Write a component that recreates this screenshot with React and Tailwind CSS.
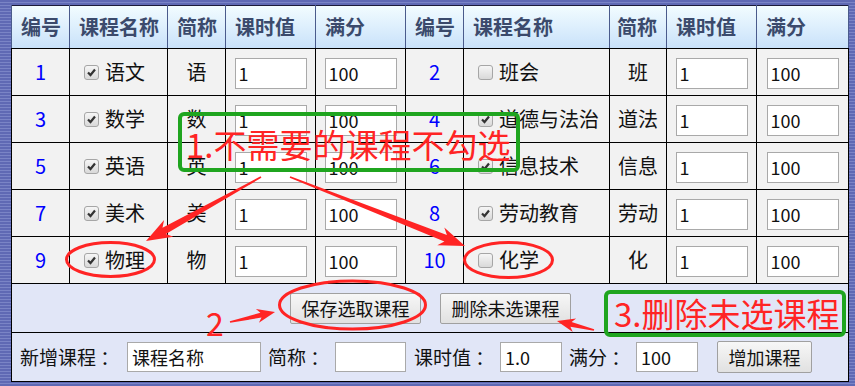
import React from "react";

const rows = [
  { a: [1, "语文", "语", true], b: [2, "班会", "班", false] },
  { a: [3, "数学", "数", true], b: [4, "道德与法治", "道法", true] },
  { a: [5, "英语", "英", true], b: [6, "信息技术", "信息", true] },
  { a: [7, "美术", "美", true], b: [8, "劳动教育", "劳动", true] },
  { a: [9, "物理", "物", true], b: [10, "化学", "化", false] },
];

const widths = [58, 98, 58, 90, 90, 58, 146, 57, 90, 92];
const heads = ["编号", "课程名称", "简称", "课时值", "满分", "编号", "课程名称", "简称", "课时值", "满分"];

function Check({ on }) {
  return (
    <span className="inline-flex items-center justify-center w-[15px] h-[15px] rounded-[3px] border border-[#a6a6a6] bg-linear-to-b from-[#f6f6f6] to-[#d9d9d9] shrink-0">
      {on && (
        <svg width="11" height="11" viewBox="0 0 11 11">
          <path d="M2 5.5 L4.5 8 L9 2.5" fill="none" stroke="#333" strokeWidth="2.2" />
        </svg>
      )}
    </span>
  );
}

function Cells({ d }) {
  const [no, name, short, on] = d;
  return (
    <>
      <td className="border border-black text-center text-[#0000ff]">{no}</td>
      <td className="border border-black pl-[14px]">
        <div className="flex items-center gap-[6px]">
          <Check on={on} />
          <span>{name}</span>
        </div>
      </td>
      <td className="border border-black text-center">{short}</td>
      <td className="border border-black text-center">
        <input defaultValue="1" className="w-[72px] h-[31px] border border-[#a9a9a9] bg-white px-[3px] text-[18px] align-middle" />
      </td>
      <td className="border border-black text-center">
        <input defaultValue="100" className="w-[72px] h-[31px] border border-[#a9a9a9] bg-white px-[3px] text-[18px] align-middle" />
      </td>
    </>
  );
}

// tapered red arrow: thin tail, wider shaft, barbed head
function arrow(x1, y1, x2, y2, t0, t1, hl, hw) {
  const dx = x2 - x1, dy = y2 - y1;
  const L = Math.hypot(dx, dy);
  const ux = dx / L, uy = dy / L;
  const nx = -uy, ny = ux;
  const bx = x2 - ux * hl, by = y2 - uy * hl;
  const nb = x2 - ux * hl * 0.8, mb = y2 - uy * hl * 0.8;
  const p = [
    [x1 + (nx * t0) / 2, y1 + (ny * t0) / 2],
    [nb + (nx * t1) / 2, mb + (ny * t1) / 2],
    [bx + (nx * hw) / 2, by + (ny * hw) / 2],
    [x2, y2],
    [bx - (nx * hw) / 2, by - (ny * hw) / 2],
    [nb - (nx * t1) / 2, mb - (ny * t1) / 2],
    [x1 - (nx * t0) / 2, y1 - (ny * t0) / 2],
  ];
  return p.map((q) => q[0].toFixed(1) + "," + q[1].toFixed(1)).join(" ");
}

const btn =
  "h-[31px] px-[8px] border border-[#a0a0a0] rounded-[2px] bg-linear-to-b from-[#f7f7f7] to-[#e1e1e1] text-[18px] leading-none text-[#111] whitespace-nowrap";
const field = "h-[30px] border border-[#a9a9a9] bg-white px-[4px] text-[18px]";

export default function App() {
  return (
    <div className="relative w-[855px] h-[386px] overflow-hidden bg-[repeating-linear-gradient(180deg,#5f69b4_0px,#5f69b4_2px,#7a84c6_2px,#7a84c6_3px)] pt-[5px] pl-[11px] font-['Noto_Sans_CJK_SC',sans-serif] text-[20px] text-[#111]">
      <table className="table-fixed border-collapse w-[837px] border border-[#1c1c3a] bg-[#f2f2f2]">
        <colgroup>
          {widths.map((w, i) => (
            <col key={i} style={{ width: w }} />
          ))}
        </colgroup>
        <thead>
          <tr className="h-[43px] bg-linear-to-b from-[#f2fcff] to-[#c8e1fa]">
            {heads.map((h, i) => (
              <th
                key={i}
                className={
                  "border-x border-[#4a5b8c] border-b border-b-black font-bold text-[#3b4a6c] text-left whitespace-nowrap " +
                  (i === 7 ? "pl-[7px]" : "pl-[9px]")
                }
              >
                {h}
              </th>
            ))}
          </tr>
        </thead>
        <tbody>
          {rows.map((r, i) => (
            <tr key={i} className="h-[47px]">
              <Cells d={r.a} />
              <Cells d={r.b} />
            </tr>
          ))}
          <tr className="h-[49px] bg-[#e1e6f7]">
            <td colSpan={10} className="border border-black">
              <div className="flex justify-center gap-[19px] pl-[1px]">
                <button className={btn + " w-[131px]"}>保存选取课程</button>
                <button className={btn + " w-[131px]"}>删除未选课程</button>
              </div>
            </td>
          </tr>
          <tr className="h-[49px] bg-[#e1e6f7]">
            <td colSpan={10} className="border border-black pl-[8px]">
              <div className="flex items-center text-[19px]">
                <span className="w-[107px] whitespace-nowrap">新增课程 ：</span>
                <input defaultValue="课程名称" className={field + " w-[134px]"} />
                <span className="ml-[7px] w-[67px] whitespace-nowrap">简称 ：</span>
                <input className={field + " w-[71px]"} />
                <span className="ml-[8px] w-[86px] whitespace-nowrap">课时值 ：</span>
                <input defaultValue="1.0" className={field + " w-[62px]"} />
                <span className="ml-[7px] w-[67px] whitespace-nowrap">满分 ：</span>
                <input defaultValue="100" className={field + " w-[62px]"} />
                <button className={btn + " ml-[19px] w-[95px] h-[32px]"}>增加课程</button>
              </div>
            </td>
          </tr>
        </tbody>
      </table>

      <div className="absolute left-[178px] top-[112px] w-[342px] h-[60px] border-[4px] border-[#1fa51f] rounded-[6px] pl-[4px] flex items-center">
        <span className="text-[33px] leading-[33px] text-[#ff2424] whitespace-nowrap mt-[5px]">1.不需要的课程不勾选</span>
      </div>
      <div className="absolute left-[604px] top-[290px] w-[242px] h-[47px] border-[4px] border-[#1fa51f] rounded-[6px] pl-[6px] flex items-center">
        <span className="text-[33px] leading-[33px] text-[#ff2424] whitespace-nowrap">3.删除未选课程</span>
      </div>
      <span className="absolute left-[206px] top-[306px] text-[32px] leading-[32px] text-[#ff2424]">2</span>

      <svg className="absolute inset-0 pointer-events-none" width="855" height="386">
        <g fill="none" stroke="#ff2424" strokeWidth="3">
          <ellipse cx="110.5" cy="259.5" rx="44" ry="17" />
          <ellipse cx="508.5" cy="260" rx="44" ry="17.5" />
          <ellipse cx="352.5" cy="305" rx="73" ry="24" />
        </g>
        <g fill="#ff2424">
          <polygon points={arrow(261, 177, 146, 241, 1.5, 7, 26, 19)} />
          <polygon points={arrow(290, 177, 465, 246, 1.5, 7, 26, 19)} />
          <polygon points={arrow(230, 322, 275, 312, 1.5, 5, 18, 14)} />
          <polygon points={arrow(594, 330, 557, 321, 1.5, 5, 18, 14)} />
        </g>
      </svg>
    </div>
  );
}
